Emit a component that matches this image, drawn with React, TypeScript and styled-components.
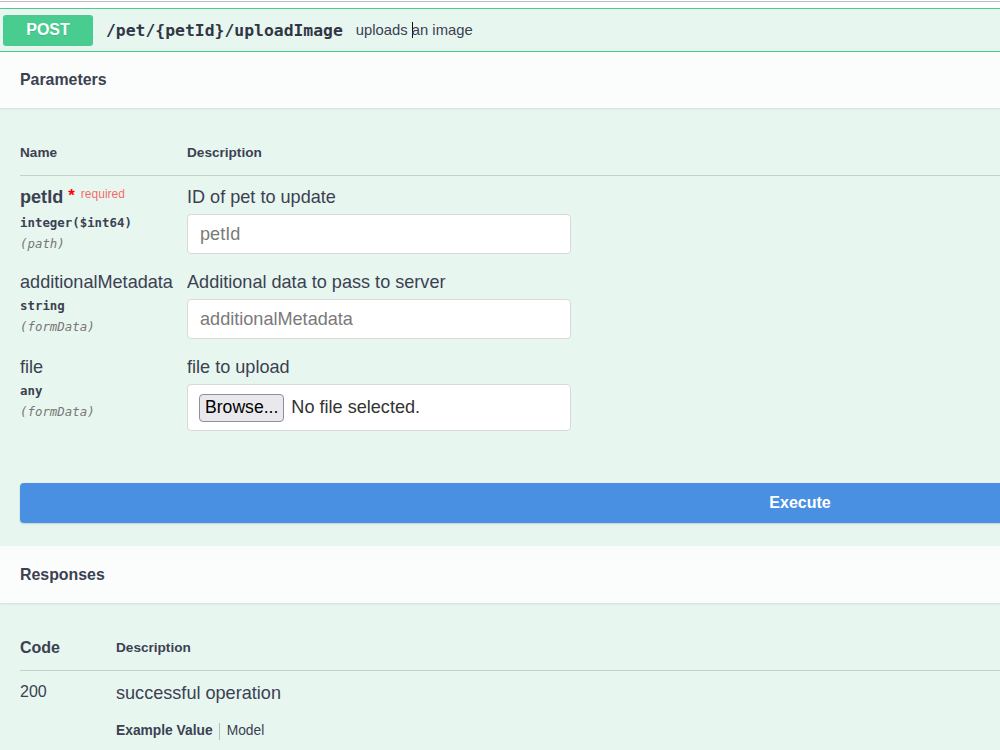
import React from 'react'
import styled, { createGlobalStyle } from 'styled-components'

const GlobalStyle = createGlobalStyle`
  html, body {
    margin: 0;
    padding: 0;
    background: #ffffff;
    overflow: hidden;
  }
  body {
    font-family: 'Liberation Sans', Arial, sans-serif;
    color: #3b4151;
  }
`

const Page = styled.div`
  width: 1600px;
  padding-top: 1px;
`

const TopRule = styled.div`
  height: 1px;
  background: #bdbdc6;
  margin-bottom: 6px;
`

const OpBlock = styled.div`
  background: #e8f6f0;
  border-top: 1px solid #49cc90;
  padding-bottom: 40px;
`

const Summary = styled.div`
  display: flex;
  align-items: center;
  height: 42px;
  padding: 0 3px;
  border-bottom: 1px solid #49cc90;
`

const MethodBadge = styled.span`
  display: flex;
  align-items: center;
  justify-content: center;
  width: 90px;
  height: 31px;
  border-radius: 3px;
  background: #49cc90;
  color: #ffffff;
  font-size: 16px;
  font-weight: 700;
  text-shadow: 0 1px 0 rgba(0, 0, 0, 0.1);
`

const PathText = styled.span`
  margin-left: 13px;
  font-family: 'DejaVu Sans Mono', 'Liberation Mono', monospace;
  font-size: 16.4px;
  font-weight: 700;
  color: #303645;
`

const SummaryDesc = styled.span`
  margin-left: 13px;
  font-size: 14.8px;
  color: #3b4151;
`

const Caret = styled.span`
  display: inline-block;
  width: 1px;
  height: 16px;
  margin-right: -1px;
  background: #111;
  vertical-align: -3px;
`

const SectionHeader = styled.div<{ $height: number }>`
  position: relative;
  display: flex;
  align-items: center;
  height: ${({ $height }) => $height}px;
  padding: 0 20px;
  background: rgba(255, 255, 255, 0.8);
  box-shadow: 0 1px 2px rgba(0, 0, 0, 0.1);
`

const SectionTitle = styled.h4`
  margin: 0;
  font-size: 15.9px;
  font-weight: 700;
  color: #3b4151;
`

const SectionBody = styled.div`
  padding: 35px 0 0 20px;
`

const HeadRow = styled.div<{ $first: number }>`
  display: grid;
  grid-template-columns: ${({ $first }) => $first}px 1fr;
  align-items: center;
  padding-bottom: 12px;
  border-bottom: 1px solid rgba(59, 65, 81, 0.2);
  line-height: 20px;
`

const HeadCell = styled.div<{ $size?: number }>`
  font-size: ${({ $size }) => $size || 13.6}px;
  font-weight: 700;
  color: #3b4151;
`

const ParamList = styled.div`
  display: flex;
  flex-direction: column;
  gap: 18px;
  padding-top: 11px;
`

const ParamRow = styled.div`
  display: grid;
  grid-template-columns: 167px 1fr;
`

const ParamName = styled.div<{ $required?: boolean }>`
  font-size: 18.1px;
  line-height: 20px;
  font-weight: ${({ $required }) => ($required ? 700 : 400)};
  color: #3b4151;
  white-space: nowrap;
`

const Asterisk = styled.span`
  margin-left: 5px;
  color: #ff0000;
  font-size: 17px;
  position: relative;
  top: -2px;
`

const RequiredTag = styled.span`
  margin-left: 6px;
  font-size: 12px;
  font-weight: 400;
  color: rgba(255, 0, 0, 0.6);
  position: relative;
  top: -5px;
`

const ParamMeta = styled.div`
  margin-top: 3px;
  font-family: 'DejaVu Sans Mono', 'Liberation Mono', monospace;
  font-size: 12.4px;
  line-height: 21px;
`

const ParamType = styled.div`
  font-weight: 700;
  color: #3b4151;
`

const ParamIn = styled.div`
  font-style: italic;
  color: #777777;
`

const ParamDesc = styled.div`
  font-size: 18.1px;
  line-height: 20px;
  color: #3b4151;
`

const TextInput = styled.input`
  display: block;
  box-sizing: border-box;
  width: 384px;
  height: 40px;
  margin: 7px 0 0;
  padding: 0 12px;
  background: #ffffff;
  border: 1px solid #d9d9d9;
  border-radius: 4px;
  font-family: 'Liberation Sans', Arial, sans-serif;
  font-size: 18.1px;
  color: #3b4151;
  outline: none;

  &::placeholder {
    color: #7a7a7a;
  }
`

const FileField = styled.div`
  display: flex;
  align-items: center;
  box-sizing: border-box;
  width: 384px;
  height: 47px;
  margin-top: 7px;
  padding: 0 11px;
  background: #ffffff;
  border: 1px solid #d9d9d9;
  border-radius: 4px;
`

const BrowseButton = styled.button`
  height: 28px;
  padding: 0 5px;
  background: #e9e9ed;
  border: 1px solid #8f8f9d;
  border-radius: 4px;
  font-family: 'Liberation Sans', Arial, sans-serif;
  font-size: 17.6px;
  color: #000000;
`

const FileStatus = styled.span`
  margin-left: 7px;
  font-size: 18.1px;
  color: #333333;
`

const ExecuteWrapper = styled.div`
  padding: 52px 20px 23px;
`

const ExecuteButton = styled.button`
  display: block;
  width: 100%;
  height: 40px;
  border: none;
  border-radius: 4px;
  background: #4990e2;
  color: #ffffff;
  font-family: 'Liberation Sans', Arial, sans-serif;
  font-size: 16px;
  font-weight: 700;
  box-shadow: 0 1px 2px rgba(0, 0, 0, 0.15);
`

const ResponseRow = styled.div`
  display: grid;
  grid-template-columns: 96px 1fr;
  padding-top: 11px;
`

const StatusCode = styled.div`
  font-size: 16px;
  line-height: 20px;
  color: #3b4151;
`

const ResponseDesc = styled.div`
  font-size: 18.1px;
  line-height: 22px;
  color: #3b4151;
`

const TabBar = styled.div`
  display: flex;
  align-items: center;
  margin-top: 17px;
  line-height: 20px;
`

const Tab = styled.span<{ $active?: boolean }>`
  font-size: 13.8px;
  font-weight: ${({ $active }) => ($active ? 700 : 400)};
  color: #3b4151;
`

const TabDivider = styled.span`
  width: 1px;
  height: 17px;
  margin: 0 7px 0 6px;
  background: rgba(59, 65, 81, 0.3);
`

type Param = {
  name: string
  type: string
  location: string
  description: string
  required?: boolean
  file?: boolean
}

const params: Param[] = [
  { name: 'petId', type: 'integer($int64)', location: '(path)', description: 'ID of pet to update', required: true },
  { name: 'additionalMetadata', type: 'string', location: '(formData)', description: 'Additional data to pass to server' },
  { name: 'file', type: 'any', location: '(formData)', description: 'file to upload', file: true },
]

const App: React.FC = () => {
  return (
    <Page>
      <GlobalStyle />
      <TopRule />
      <OpBlock>
        <Summary>
          <MethodBadge>POST</MethodBadge>
          <PathText>/pet/{'{petId}'}/uploadImage</PathText>
          <SummaryDesc>
            uploads <Caret />an image
          </SummaryDesc>
        </Summary>

        <SectionHeader $height={56}>
          <SectionTitle>Parameters</SectionTitle>
        </SectionHeader>
        <SectionBody>
          <HeadRow $first={167}>
            <HeadCell>Name</HeadCell>
            <HeadCell>Description</HeadCell>
          </HeadRow>
          <ParamList>
            {params.map((p) => (
              <ParamRow key={p.name}>
                <div>
                  <ParamName $required={p.required}>
                    {p.name}
                    {p.required && (
                      <>
                        <Asterisk>*</Asterisk>
                        <RequiredTag>required</RequiredTag>
                      </>
                    )}
                  </ParamName>
                  <ParamMeta>
                    <ParamType>{p.type}</ParamType>
                    <ParamIn>{p.location}</ParamIn>
                  </ParamMeta>
                </div>
                <div>
                  <ParamDesc>{p.description}</ParamDesc>
                  {p.file ? (
                    <FileField>
                      <BrowseButton type="button">Browse...</BrowseButton>
                      <FileStatus>No file selected.</FileStatus>
                    </FileField>
                  ) : (
                    <TextInput placeholder={p.name} />
                  )}
                </div>
              </ParamRow>
            ))}
          </ParamList>
        </SectionBody>

        <ExecuteWrapper>
          <ExecuteButton type="button">Execute</ExecuteButton>
        </ExecuteWrapper>

        <SectionHeader $height={57}>
          <SectionTitle>Responses</SectionTitle>
        </SectionHeader>
        <SectionBody>
          <HeadRow $first={96}>
            <HeadCell $size={16}>Code</HeadCell>
            <HeadCell>Description</HeadCell>
          </HeadRow>
          <ResponseRow>
            <StatusCode>200</StatusCode>
            <div>
              <ResponseDesc>successful operation</ResponseDesc>
              <TabBar>
                <Tab $active>Example Value</Tab>
                <TabDivider />
                <Tab>Model</Tab>
              </TabBar>
            </div>
          </ResponseRow>
        </SectionBody>
      </OpBlock>
    </Page>
  )
}

export default App
